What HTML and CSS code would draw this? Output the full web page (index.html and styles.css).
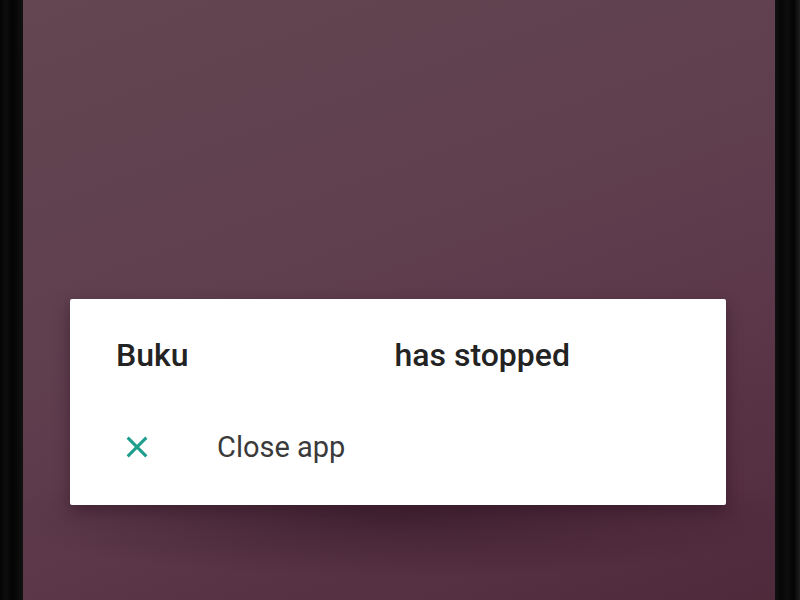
FILE: index.html
```html
<!DOCTYPE html>
<html>
<head>
<meta charset="utf-8">
<link rel="stylesheet" href="styles.css">
</head>
<body>
<div class="device">
  <div class="bezel bezel-left"></div>
  <div class="screen">
    <div class="dialog">
      <div class="title">Buku<span class="redacted"></span>has stopped</div>
      <div class="action">
        <svg class="icon" viewBox="0 0 24 24" width="28" height="28">
          <path d="M4 4 L20 20 M20 4 L4 20" stroke="#1e9e8c" stroke-width="2.6" fill="none" stroke-linecap="butt"/>
        </svg>
        <span class="label">Close app</span>
      </div>
    </div>
  </div>
  <div class="bezel bezel-right"></div>
</div>
</body>
</html>
```
FILE: styles.css
```css
html, body {
  margin: 0;
  padding: 0;
  width: 800px;
  height: 600px;
  overflow: hidden;
  background: #000;
}
.device {
  display: flex;
  width: 800px;
  height: 600px;
}
.bezel {
  height: 100%;
}
.bezel-left {
  width: 23px;
  background: linear-gradient(90deg, #050505 0px, #0e0e0e 6px, #030303 12px, #0a0a0a 18px, #121212 23px);
}
.bezel-right {
  width: 25px;
  background: linear-gradient(90deg, #111 0px, #060606 6px, #0e0e0e 12px, #040404 19px, #1e1e1e 25px);
}
.screen {
  flex: 1;
  display: flex;
  flex-direction: column;
  justify-content: flex-end;
  padding: 0 49px 95px 47px;
  background:
    radial-gradient(ellipse 400px 60px at 50% 518px, rgba(40, 15, 28, 0.45), rgba(40, 15, 28, 0) 100%),
    linear-gradient(160deg, #634651 0%, #60404f 35%, #5d3a4b 60%, #552f42 85%, #4e2a3b 100%);
}
.dialog {
  height: 206px;
  background: #fff;
  border-radius: 2px;
  box-shadow: 0 6px 16px rgba(30, 8, 20, 0.4);
  display: flex;
  flex-direction: column;
  padding-left: 46px;
  box-sizing: border-box;
}
.title {
  font-family: Roboto, "Liberation Sans", sans-serif;
  font-weight: 500;
  font-size: 32px;
  color: #232323;
  margin-top: 36px;
  line-height: 40px;
  display: flex;
  align-items: center;
}
.redacted {
  display: inline-block;
  width: 206px;
}
.action {
  display: flex;
  align-items: center;
  margin-top: 52px;
  height: 40px;
}
.icon {
  margin-left: 7px;
  width: 28px;
  height: 28px;
}
.label {
  font-family: Roboto, "Liberation Sans", sans-serif;
  font-size: 29px;
  color: #3a3a3a;
  margin-left: 66px;
}
```
